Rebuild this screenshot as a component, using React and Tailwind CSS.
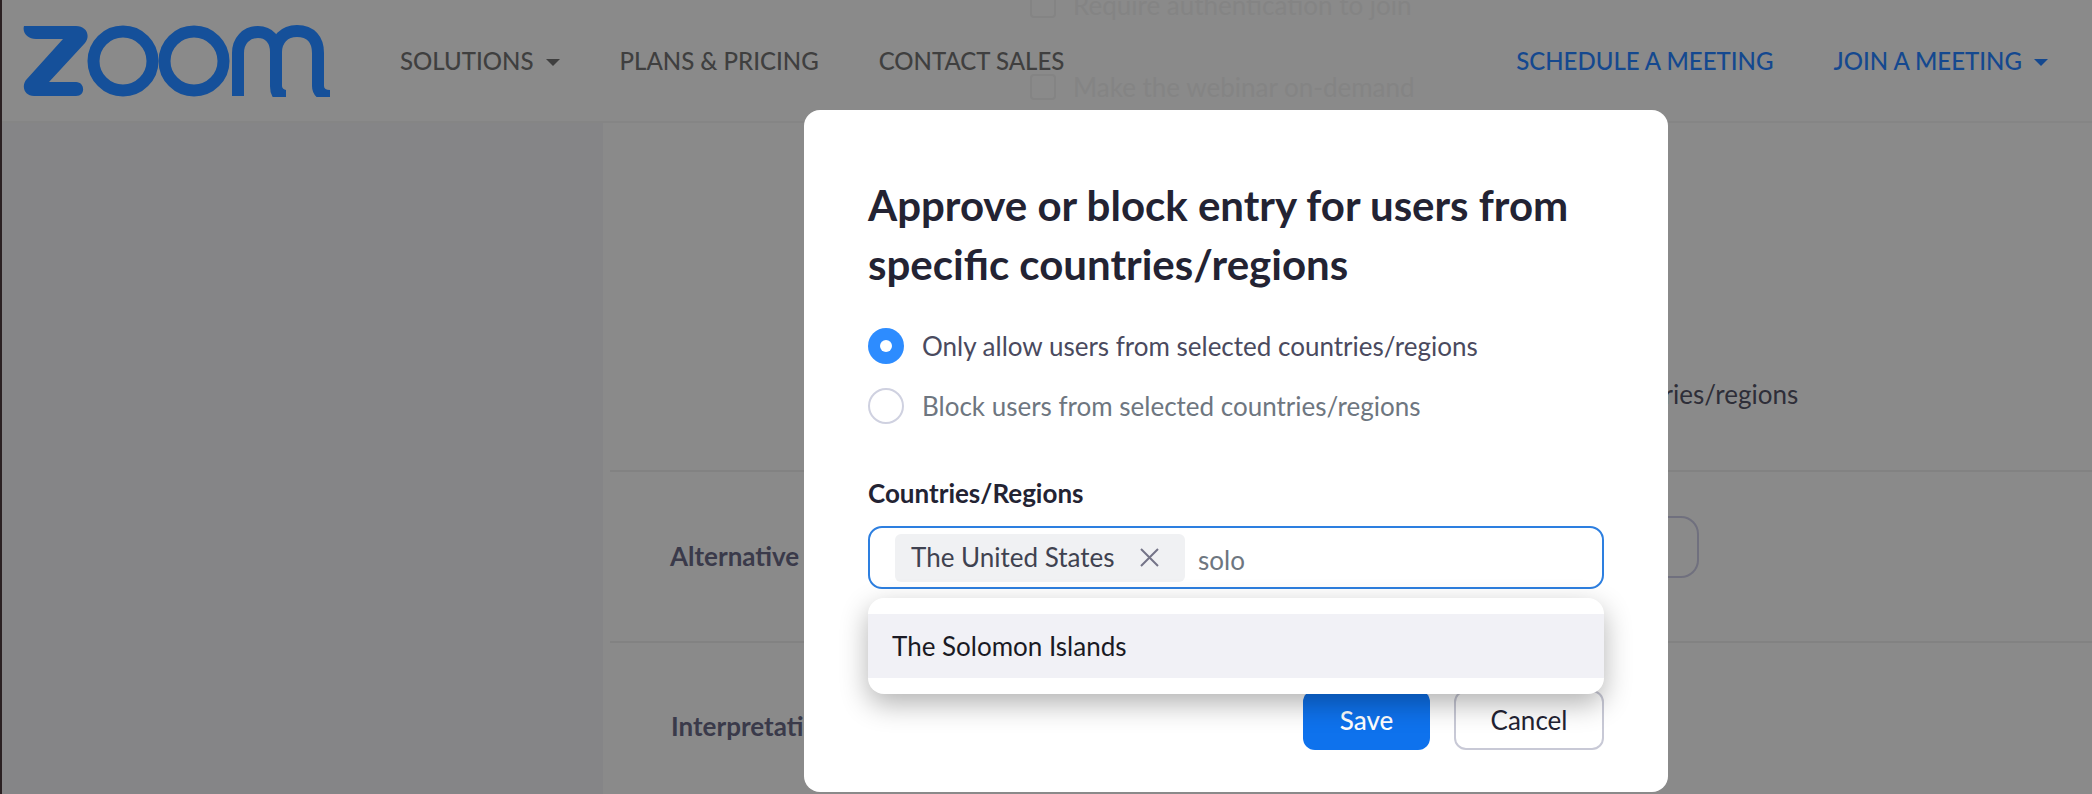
import React from 'react';

const ZoomLogo = () => (
  <svg className="w-[310px] h-[72px]" viewBox="0 0 310 72" fill="none">
    <path d="M2 1h52c10 0 15 9 9 17L27 57h27c9 0 10 14 0 14H12C3 71-1 62 4 55l37-41H14C6 14 0 8 2 1z" fill="#15509a" />
    <circle cx="101" cy="36" r="29.5" stroke="#15509a" strokeWidth="12" />
    <circle cx="172" cy="36" r="29.5" stroke="#15509a" strokeWidth="12" />
    <path d="M216 71V28c0-12 8-21 20-21 11 0 18 8 18 20v34c0 6 5 10 10 10h-4c-4 0-6-4-6-10V27M254 27c0-12 8-21 21-21 14 0 21 9 21 22v33c0 6 5 10 12 10" stroke="#15509a" strokeWidth="12" />
  </svg>
);

const Caret = ({ className }) => (
  <svg className={className} viewBox="0 0 14 7">
    <path d="M0 0h14L7 7z" fill="currentColor" />
  </svg>
);

const Modal = () => (
  <div className="absolute left-[804px] top-[110px] w-[864px] h-[682px] bg-white rounded-2xl pt-[66px] px-16">
    <h2 className="text-[42px] leading-[59px] font-bold text-[#232333] w-[736px]">
      Approve or block entry for users from specific countries/regions
    </h2>

    <div className="mt-[22px] flex flex-col">
      <div className="flex items-center h-[60px] gap-[18px]">
        <span className="w-9 h-9 rounded-full bg-[#2d8cff] flex items-center justify-center">
          <span className="w-3 h-3 rounded-full bg-white" />
        </span>
        <span className="text-[26px] text-[#4a4a5e]">Only allow users from selected countries/regions</span>
      </div>
      <div className="flex items-center h-[60px] gap-[18px]">
        <span className="w-9 h-9 rounded-full border-2 border-[#cfd1e0] bg-white" />
        <span className="text-[26px] text-[#6e7680]">Block users from selected countries/regions</span>
      </div>
    </div>

    <div className="mt-[40px] text-[26px] leading-[34px] font-bold text-[#232333]">Countries/Regions</div>

    <div className="relative mt-4">
      <div className="h-[63px] border-2 border-[#2d7fe0] rounded-[14px] flex items-center pl-[25px]">
        <div className="h-12 w-[290px] rounded-md bg-[#f0f1f3] flex items-center pl-4 gap-[25px]">
          <span className="text-[26px] text-[#3f4250]">The United States</span>
          <svg className="w-[19px] h-[19px]" viewBox="0 0 19 19" stroke="#747487" strokeWidth="2">
            <path d="M1 1l17 17M18 1L1 18" />
          </svg>
        </div>
        <span className="ml-[13px] mt-[6px] text-[26px] text-[#6e7680]">solo</span>
      </div>
      <div className="absolute left-0 top-[72px] w-full h-24 bg-white rounded-2xl py-4 shadow-[0_10px_28px_rgba(0,0,0,0.3)] z-10">
        <div className="h-16 bg-[#f1f1f6] flex items-center pl-6 text-[26px] text-[#1a1a24]">The Solomon Islands</div>
      </div>
    </div>

    <div className="mt-[101px] flex justify-end gap-6">
      <button className="w-[127px] h-[60px] rounded-xl bg-[#0e72ed] text-white text-[26px] font-medium">Save</button>
      <button className="w-[150px] h-[60px] rounded-xl border-2 border-[#c8c9d6] text-[#232333] text-[26px]">Cancel</button>
    </div>
  </div>
);

const App = () => {
  return (
    <div className="relative w-[2092px] h-[794px] overflow-hidden bg-[#8a8a8a] font-['Lato',sans-serif]">
      <div className="absolute left-0 top-0 w-[2px] h-full bg-[#2a2022]" />

      <header className="h-[123px] border-b-2 border-[#858585] flex items-center pl-[22px] pr-[44px]">
        <ZoomLogo />
        <nav className="ml-[68px] flex items-center gap-[60px] text-[24px] font-medium text-[#3f3f3f]">
          <span className="flex items-center gap-3">
            SOLUTIONS <Caret className="w-[14px] h-[7px] mt-1" />
          </span>
          <span>PLANS &amp; PRICING</span>
          <span>CONTACT SALES</span>
        </nav>
        <div className="ml-auto flex items-center gap-[60px] text-[24px] font-medium text-[#14488f]">
          <span>SCHEDULE A MEETING</span>
          <span className="flex items-center gap-3">
            JOIN A MEETING <Caret className="w-[14px] h-[7px] mt-1" />
          </span>
        </div>
      </header>

      {/* faint checkbox rows behind the header */}
      <div className="absolute left-[1030px] top-[-8px] flex flex-col gap-[56px] text-[26px] leading-[26px] text-[#848484]">
        <div className="flex items-center gap-[17px]">
          <span className="w-[26px] h-[26px] rounded border-2 border-[#848484]" />
          <span>Require authentication to join</span>
        </div>
        <div className="flex items-center gap-[17px]">
          <span className="w-[26px] h-[26px] rounded border-2 border-[#848484]" />
          <span>Make the webinar on-demand</span>
        </div>
      </div>

      <div className="flex h-[671px]">
        <aside className="w-[603px] bg-[#858587]" />
        <main className="flex-1 pl-[7px]">
          <div className="h-[349px] border-b-2 border-[#828282] pl-[462px] pt-[152px] text-[26px] text-[#2e2e38]">
            <div className="h-[100px]">Allow participants to join before start of the webinar</div>
            <div>Approve or block entry for users from specific countries/regions</div>
          </div>
          <div className="h-[171px] border-b-2 border-[#828282] flex items-center pl-[60px] relative">
            <span className="text-[26px] font-bold text-[#3a3a4a]">Alternative Hosts</span>
            <span className="absolute left-[900px] top-[44px] w-[189px] h-[62px] rounded-[18px] border-2 border-[#70707e]" />
          </div>
          <div className="pl-[61px] pt-[64px] text-[26px] font-bold text-[#3a3a4a]">Interpretation</div>
        </main>
      </div>

      <Modal />
    </div>
  );
};

export default App;
